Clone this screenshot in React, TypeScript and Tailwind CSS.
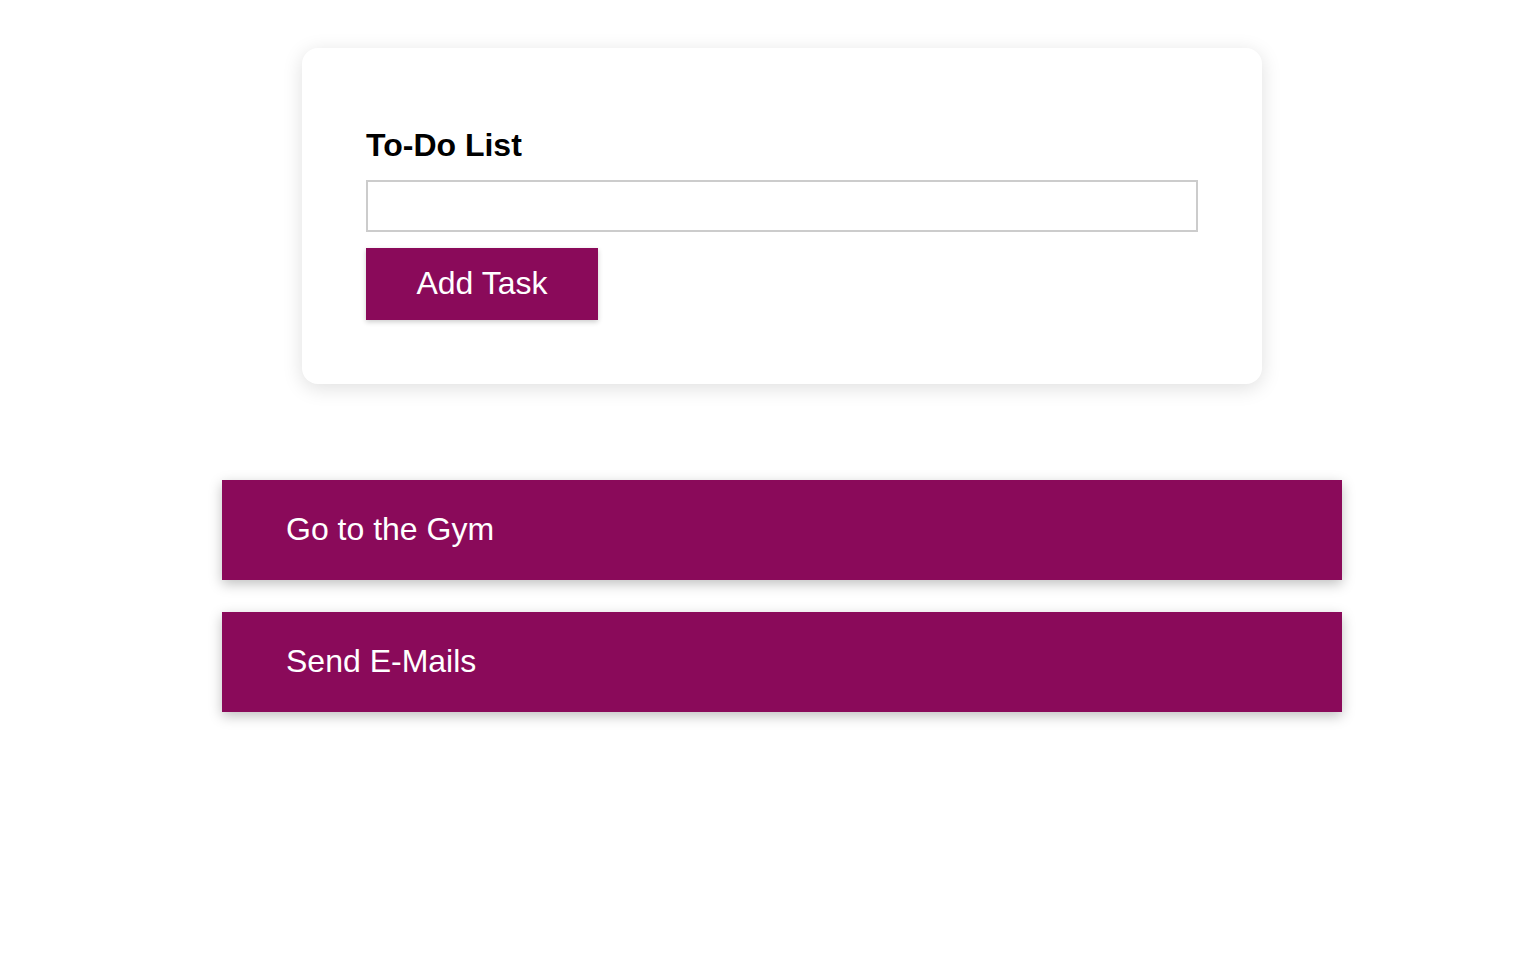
import { useState } from 'react'

const initialTasks = ['Go to the Gym', 'Send E-Mails']

export default function App() {
  const [tasks, setTasks] = useState<string[]>(initialTasks)
  const [text, setText] = useState('')

  const addTask = () => {
    if (!text.trim()) return
    setTasks([...tasks, text.trim()])
    setText('')
  }

  return (
    <div className="min-h-screen bg-white pl-[30px] pt-12 font-['Liberation_Sans',Arial,sans-serif]">
      <div className="mx-auto w-[960px] rounded-2xl bg-white px-16 pb-16 pt-[79px] shadow-[0_4px_20px_rgba(0,0,0,0.13)]">
        <h1 className="text-[32px] font-bold leading-[37px] text-black">To-Do List</h1>
        <input
          value={text}
          onChange={(e) => setText(e.target.value)}
          className="mt-4 block h-[52px] w-full border-2 border-[#cccccc] px-3 text-2xl outline-none"
        />
        <button
          onClick={addTask}
          className="mt-4 h-[72px] w-[232px] bg-[#8a0a5a] pb-[2px] text-[32px] leading-none text-white shadow-[0_2px_5px_rgba(0,0,0,0.2)]"
        >
          Add Task
        </button>
      </div>

      <ul className="mx-auto mt-24 flex w-[1120px] flex-col gap-8">
        {tasks.map((task) => (
          <li
            key={task}
            className="flex h-[100px] items-center bg-[#8a0a5a] px-16 pb-[2px] text-[32px] text-white shadow-[0_4px_12px_rgba(0,0,0,0.25)]"
          >
            {task}
          </li>
        ))}
      </ul>
    </div>
  )
}
